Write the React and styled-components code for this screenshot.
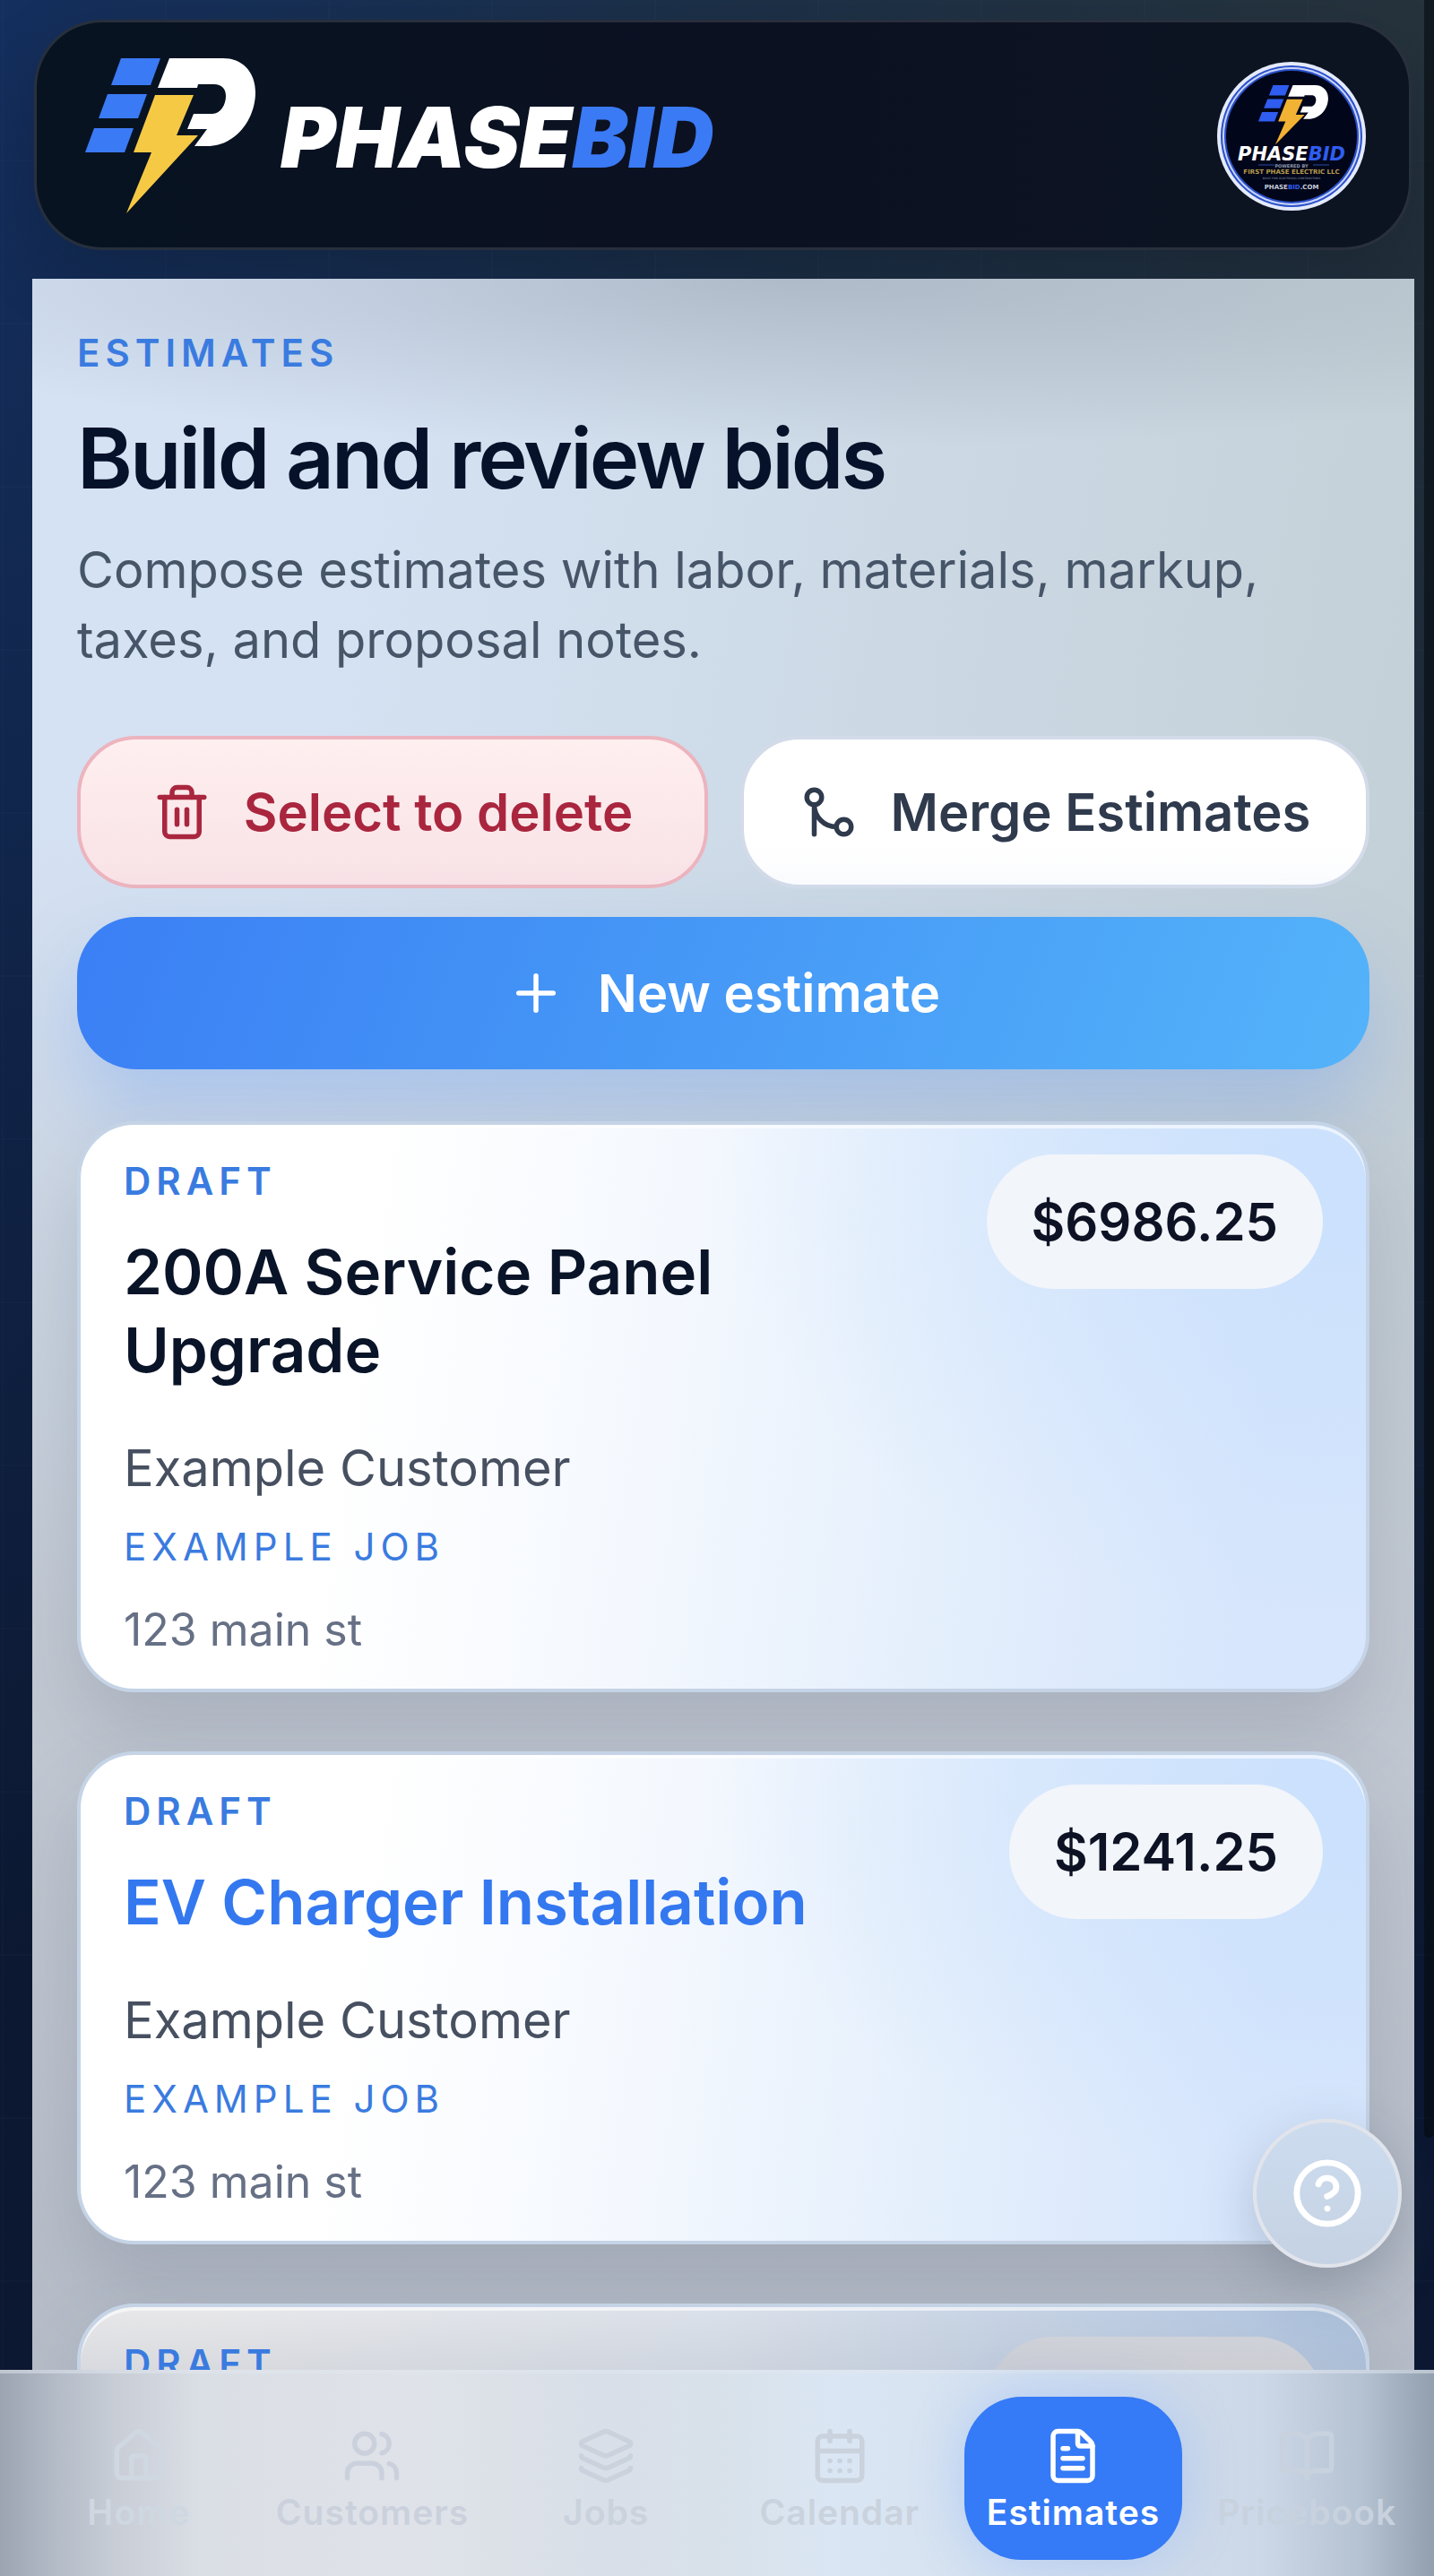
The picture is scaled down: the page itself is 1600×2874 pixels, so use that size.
import { useState } from "react";
import styled, { createGlobalStyle, css } from "styled-components";
import {
	BookOpen,
	CalendarDays,
	CircleHelp,
	FileText,
	GitMerge,
	House,
	Layers,
	Plus,
	Trash2,
	Users,
} from "lucide-react";

const estimates = [
	{
		id: 1,
		status: "Draft",
		title: "200A Service Panel Upgrade",
		customer: "Example Customer",
		job: "Example job",
		address: "123 main st",
		total: "$6986.25",
	},
	{
		id: 2,
		status: "Draft",
		title: "EV Charger Installation",
		customer: "Example Customer",
		job: "Example job",
		address: "123 main st",
		total: "$1241.25",
		active: true,
	},
	{ id: 3, status: "Draft", shaded: true },
];

const tabs = [
	{ name: "Home", Icon: House, tone: "#cfd7e1" },
	{ name: "Customers", Icon: Users, tone: "#cbd1dc" },
	{ name: "Jobs", Icon: Layers, tone: "#cad2dd" },
	{ name: "Calendar", Icon: CalendarDays, tone: "#c9d2dd" },
	{ name: "Estimates", Icon: FileText },
	{ name: "Pricebook", Icon: BookOpen, tone: "#c8d2de" },
];

function Mark({ bolt = "#f6c945", blue = "#3b7af5" }) {
	return (
		<>
			<g fill={blue}>
				<path d="M40 0H84L73 30H29Z" />
				<path d="M25 40H69L59 67H15Z" />
				<path d="M10 78H54L44 105H0Z" />
			</g>
			<path
				fill="#fff"
				d="M94 0H154C176 0 190 16 190 38C190 68 168 98 136 98H122L136 79H114L121 62H142C151 62 157 52 157 42C157 34 152 29 144 29H126L125 33H81Z"
			/>
			<path fill={bolt} d="M78 41H121L102 86H126L46 173L74 105H54Z" />
		</>
	);
}

function Logo() {
	return (
		<LogoSvg viewBox="0 0 702 174" role="img" aria-label="PhaseBid">
			<Mark />
			<text x="218" y="122">
				PHASE<tspan>BID</tspan>
			</text>
		</LogoSvg>
	);
}

function Badge() {
	return (
		<svg viewBox="0 0 166 166" width="166" height="166" aria-hidden="true">
			<circle cx="83" cy="83" r="83" fill="#e4eafb" />
			<circle cx="83" cy="83" r="79" fill="#2b50c8" />
			<circle cx="83" cy="83" r="77" fill="#c9d5fa" />
			<circle cx="83" cy="83" r="75" fill="#2b50c8" />
			<circle cx="83" cy="83" r="73" fill="#02061a" />
			<g transform="translate(46 26) scale(.41 .385)">
				<Mark bolt="#f2b233" blue="#2f5df0" />
			</g>
			<BadgeName x="83" y="110">
				PHASE<tspan fill="#2f5df0">BID</tspan>
			</BadgeName>
			<path d="M46 115H64M107 115H125" stroke="#2b4a9e" strokeWidth="1" />
			<BadgeText x="83" y="118" size="5" fill="#8f97ab">
				POWERED BY
			</BadgeText>
			<BadgeText x="83" y="125" size="7" fill="#b79b4b">
				FIRST PHASE ELECTRIC LLC
			</BadgeText>
			<BadgeText x="83" y="131" size="3" fill="#55607c">
				BUILT FOR ELECTRICAL CONTRACTORS
			</BadgeText>
			<BadgeText x="83" y="142" size="7" fill="#c9cfdd">
				PHASE<tspan fill="#2f5df0">BID</tspan>.COM
			</BadgeText>
		</svg>
	);
}

function EstimateCard({ item }) {
	return (
		<Card $shaded={item.shaded}>
			<CardInfo>
				<Label as="p">{item.status}</Label>
				{item.title && <CardTitle $active={item.active}>{item.title}</CardTitle>}
				{item.customer && <Customer>{item.customer}</Customer>}
				{item.job && (
					<Label as="p" $light>
						{item.job}
					</Label>
				)}
				{item.address && <Address>{item.address}</Address>}
			</CardInfo>
			<Price $shaded={item.shaded}>{item.total}</Price>
		</Card>
	);
}

export default function App() {
	let [tab, setTab] = useState("Estimates");

	return (
		<>
			<GlobalStyle />
			<Shell>
				<Header>
					<Logo />
					<Avatar type="button" aria-label="Account">
						<Badge />
					</Avatar>
				</Header>

				<Panel>
					<Label as="p">Estimates</Label>
					<Title>Build and review bids</Title>
					<Intro>
						Compose estimates with labor, materials, markup, taxes, and proposal
						notes.
					</Intro>
					<Actions>
						<Button type="button" $kind="danger">
							<Trash2 />
							Select to delete
						</Button>
						<Button type="button" $kind="plain">
							<GitMerge />
							Merge Estimates
						</Button>
						<Button type="button" $kind="primary">
							<Plus />
							New estimate
						</Button>
					</Actions>
					<List>
						{estimates.map((item) => (
							<EstimateCard key={item.id} item={item} />
						))}
					</List>
				</Panel>

				<TabBar>
					{tabs.map(({ name, Icon, tone }) => (
						<Tab
							key={name}
							href={"#" + name.toLowerCase()}
							$active={tab === name}
							$tone={tone}
							onClick={() => setTab(name)}
						>
							<Icon />
							{name}
						</Tab>
					))}
				</TabBar>

				<Scrollbar />
				<Help type="button" aria-label="Help">
					<CircleHelp />
				</Help>
			</Shell>
		</>
	);
}

const GlobalStyle = createGlobalStyle`
	* {
		box-sizing: border-box;
	}

	body {
		margin: 0;
		font-family: Inter, "Liberation Sans", sans-serif;
		color: #0a1428;
	}

	h1, h2, p {
		margin: 0;
	}

	button {
		font-family: inherit;
		cursor: pointer;
	}
`;

const Shell = styled.div`
	position: relative;
	display: flex;
	flex-direction: column;
	height: 100vh;
	overflow: hidden;
	background:
		linear-gradient(rgba(148, 184, 255, 0.02) 2px, transparent 2px) 0 -4px / 182px 182px,
		linear-gradient(90deg, rgba(148, 184, 255, 0.02) 2px, transparent 2px) 2px 0 / 182px 182px,
		linear-gradient(180deg, rgba(10, 22, 44, 0) 0, #0c1831 2200px),
		linear-gradient(90deg, #142f5e 0%, #1c3048 50%, #26333c 100%);
`;

const Header = styled.header`
	display: flex;
	align-items: center;
	justify-content: space-between;
	flex-shrink: 0;
	margin: 22px 25px 32px 38px;
	padding: 40px 48px 37px 54px;
	border: 3px solid rgba(70, 75, 88, 0.5);
	border-radius: 76px;
	background: linear-gradient(90deg, #071321 0%, #0c1122 50%, #0c1421 100%);
	box-shadow: 0 30px 80px rgba(3, 8, 20, 0.2);
`;

const LogoSvg = styled.svg`
	width: 702px;
	height: 174px;

	text {
		font-family: Inter, sans-serif;
		font-size: 94px;
		font-weight: 900;
		font-style: italic;
		fill: #fff;
	}

	tspan {
		fill: #3b7af5;
	}
`;

const BadgeName = styled.text`
	font-family: "DejaVu Sans", sans-serif;
	font-size: 21px;
	font-weight: 700;
	font-style: italic;
	text-anchor: middle;
	fill: #fff;
`;

const BadgeText = styled.text.attrs((p) => ({ fontSize: p.size }))`
	font-family: "DejaVu Sans", sans-serif;
	font-weight: 700;
	text-anchor: middle;
`;

const Avatar = styled.button`
	display: flex;
	padding: 0;
	border: 0;
	border-radius: 50%;
	background: none;
`;

const Panel = styled.main`
	flex: 1;
	min-height: 0;
	overflow: hidden;
	margin: 0 22px 0 36px;
	padding: 56px 50px 0;
	background:
		radial-gradient(ellipse 75% 190px at 55% 0, rgba(90, 100, 115, 0.28), rgba(90, 100, 115, 0)),
		linear-gradient(180deg, rgba(190, 197, 208, 0) 600px, #c3cad4 1500px, #b6bdc8 2334px),
		linear-gradient(100deg, #d5e2f3 20%, #c2cfd5 90%);
`;

const Label = styled.span`
	font-size: 42px;
	line-height: 54px;
	font-weight: ${(p) => (p.$light ? 400 : 600)};
	letter-spacing: 6px;
	text-transform: uppercase;
	color: #3a7be0;
`;

const Title = styled.h1`
	margin-top: 34px;
	font-size: 94px;
	line-height: 112px;
	font-weight: 600;
	letter-spacing: -3px;
	color: #06122a;
`;

const Intro = styled.p`
	margin-top: 30px;
	font-size: 56px;
	line-height: 78px;
	color: #475569;
`;

const Actions = styled.div`
	display: grid;
	grid-template-columns: 704px 1fr;
	gap: 32px 36px;
	margin-top: 68px;
`;

const kinds = {
	danger: css`
		border: 4px solid #ecb4be;
		background: linear-gradient(#ffefef, #f8e2e6);
		color: #a9263e;
	`,
	plain: css`
		border: 4px solid #d3dbe9;
		background: linear-gradient(#fff 70%, #fbfcfe);
		color: #2f3a4d;
	`,
	primary: css`
		grid-column: 1 / -1;
		border: 0;
		background: linear-gradient(110deg, #3b7ff5, #4597f6 45%, #54b3fa);
		box-shadow: 0 44px 90px rgba(59, 130, 246, 0.25);
		color: #fff;
	`,
};

const Button = styled.button`
	display: flex;
	align-items: center;
	justify-content: center;
	gap: 36px;
	height: 170px;
	padding: 0;
	border-radius: 66px;
	font-size: 58px;
	font-weight: 600;
	${(p) => kinds[p.$kind]}

	svg {
		width: 66px;
		height: 66px;
	}
`;

const List = styled.div`
	display: flex;
	flex-direction: column;
	gap: 66px;
	margin-top: 58px;
`;

const Card = styled.article`
	display: flex;
	align-items: flex-start;
	justify-content: space-between;
	gap: 40px;
	padding: 33px 48px 34px;
	border: 4px solid #c5d3e6;
	border-radius: 64px;
	background: ${(p) =>
		p.$shaded
			? "linear-gradient(rgba(190, 195, 205, 0) 0, rgba(170, 177, 190, 0.4) 110px), linear-gradient(90deg, #e8e8ea 10%, #dbe1ea 50%, #adc2de)"
			: "radial-gradient(ellipse 50% 80% at 100% 10%, rgba(201, 224, 253, 0.9), rgba(201, 224, 253, 0)), linear-gradient(98deg, #fff 22%, #f4f8fe 45%, #e6f0fc 65%, #d7e6fc 90%)"};
	box-shadow:
		inset 0 4px 0 rgba(255, 255, 255, 0.6),
		0 44px 90px rgba(70, 80, 100, 0.2);
`;

const CardInfo = styled.div`
	width: 800px;
	padding-top: 3px;
`;

const CardTitle = styled.h2`
	margin-top: 31px;
	font-size: 69px;
	line-height: 87px;
	font-weight: 600;
	color: ${(p) => (p.$active ? "#3478f0" : "#0a1428")};
`;

const Customer = styled.p`
	margin: 50px 0 23px;
	font-size: 56px;
	line-height: 76px;
	color: #475060;
`;

const Address = styled.p`
	margin-top: 33px;
	font-size: 50px;
	line-height: 64px;
	color: #667085;
`;

const Price = styled.p`
	min-width: ${(p) => (p.$shaded ? 376 : 0)}px;
	min-height: 150px;
	padding: 0 50px;
	border-radius: 75px;
	background: ${(p) =>
		p.$shaded ? "linear-gradient(#cfd2d9, #c9cacf 60px)" : "#f2f5fa"};
	font-size: 58px;
	line-height: 150px;
	font-weight: 600;
	white-space: nowrap;
	color: #0d1324;
`;

const TabBar = styled.nav`
	display: grid;
	grid-template-columns: repeat(6, 1fr);
	gap: 17px;
	flex-shrink: 0;
	padding: 26px 20px 18px 33px;
	border-top: 4px solid rgba(226, 232, 240, 0.5);
	background: linear-gradient(
		90deg,
		#9da4b1 0,
		#b4bcc8 4%,
		#c8cdd6 8%,
		#dadee5 14%,
		#dfe3e9 28%,
		#d9dfe8 42%,
		#d8e1ea 50%,
		#dae6f3 58%,
		#d3dfee 75%,
		#ccd8e7 88%,
		#b5c2d2 95%,
		#929fae 100%
	);
`;

const Tab = styled.a`
	display: flex;
	flex-direction: column;
	align-items: center;
	justify-content: center;
	gap: 5px;
	min-width: 0;
	height: 182px;
	padding-top: 4px;
	border-radius: 64px;
	font-size: 39px;
	line-height: 50px;
	font-weight: 600;
	letter-spacing: 1px;
	text-decoration: none;
	color: ${(p) => p.$tone};

	${(p) =>
		p.$active &&
		css`
			background: #357af6;
			box-shadow: 0 0 60px rgba(90, 150, 255, 0.3);
			color: #fff;
		`}

	svg {
		width: 66px;
		height: 66px;
	}
`;

const Scrollbar = styled.div`
	position: absolute;
	top: 0;
	right: 0;
	width: 11px;
	height: 83%;
	border-radius: 0 0 6px 6px;
	background: rgba(5, 10, 15, 0.6);
`;

const Help = styled.button`
	position: absolute;
	right: 36px;
	bottom: 344px;
	display: flex;
	align-items: center;
	justify-content: center;
	width: 166px;
	height: 166px;
	border: 4px solid #e1e4eb;
	border-radius: 50%;
	background: linear-gradient(#ccdcee, #c5d2e4);
	box-shadow: 0 20px 60px rgba(60, 70, 90, 0.25);
	color: #fff;

	svg {
		width: 82px;
		height: 82px;
	}
`;
